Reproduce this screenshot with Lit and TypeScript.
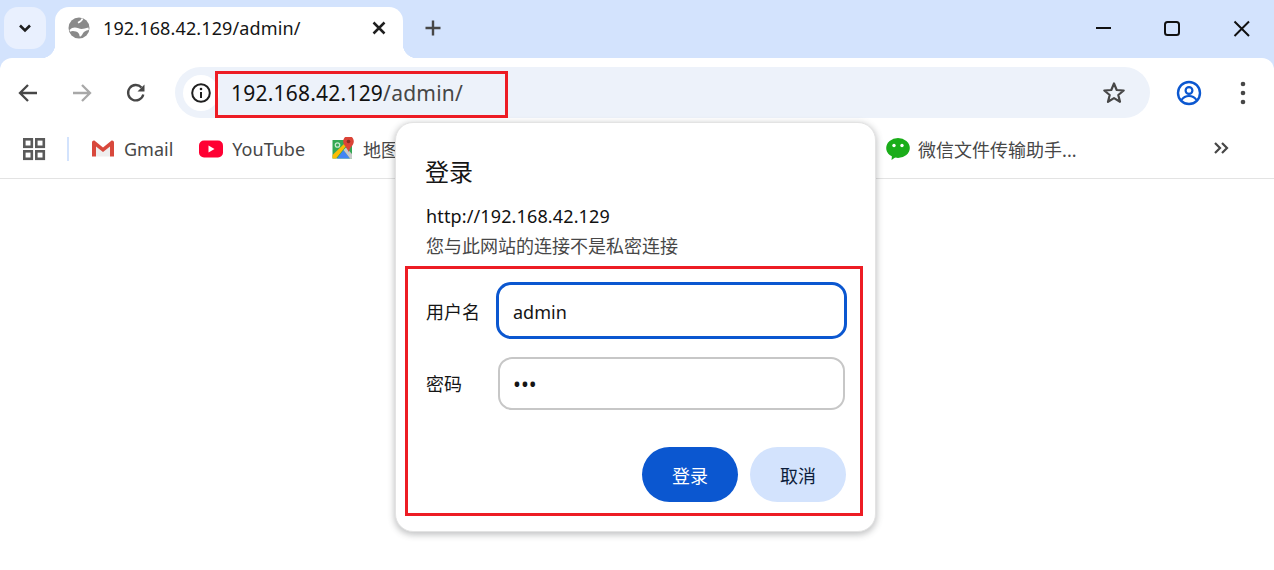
import { LitElement, html, css, svg } from "lit";
import { customElement } from "lit/decorators.js";

const FONT = css`"Noto Sans", "Noto Sans CJK SC", sans-serif`;

@customElement("app-root")
export class AppRoot extends LitElement {
  static styles = css`
    :host { display: block; position: relative; width: 1274px; height: 570px; overflow: hidden; background: #fff; font-family: ${FONT}; color: #1f1f1f; }
    * { box-sizing: border-box; }
    svg { display: block; flex: none; }
    .top { background: #d3e3fd; }
    .strip { height: 58px; display: flex; align-items: flex-start; padding: 7px 0 0 4px; }
    .tab-search { width: 42px; height: 42px; border-radius: 14px; background: #e9f0fe; display: flex; align-items: center; justify-content: center; margin-right: 9px; }
    .tab { position: relative; width: 348px; height: 51px; background: #fff; border-radius: 14px 14px 0 0; display: flex; align-items: center; padding: 0 16px 9px 13px; }
    .tab::before, .tab::after { content: ""; position: absolute; bottom: 0; width: 14px; height: 14px; }
    .tab::before { left: -14px; background: radial-gradient(circle at 0 0, transparent 14px, #fff 14.5px); }
    .tab::after { right: -14px; background: radial-gradient(circle at 100% 0, transparent 14px, #fff 14.5px); }
    .tab-title { flex: 1; margin-left: 13px; font-size: 18px; letter-spacing: 0.13px; white-space: nowrap; color: #151515; }
    .new-tab { margin: 9px 0 0 18px; width: 24px; height: 24px; }
    .win { margin-left: auto; display: flex; padding-top: 7px; padding-right: 17px; gap: 39px; }
    .win svg { width: 30px; height: 30px; }
    .toolbar { height: 70px; background: #fff; display: flex; align-items: flex-start; padding: 9px 0 0 0; border-radius: 12px 12px 0 0; }
    .nav { width: 54px; height: 51px; display: flex; align-items: center; justify-content: center; }
    .nav.first { margin-left: 1px; }
    .omni { margin-left: 12px; width: 975px; height: 51px; border-radius: 26px; background: #edf2fa; display: flex; align-items: center; padding-left: 8px; padding-right: 23px; }
    .info { width: 36px; height: 36px; border-radius: 50%; background: #fff; display: flex; align-items: center; justify-content: center; margin-right: 12px; }
    .url { flex: 1; font-size: 21px; letter-spacing: 0.22px; color: #474747; white-space: nowrap; }
    .url b { font-weight: 400; color: #111; }
    .right { display: flex; align-items: center; height: 51px; margin-left: 26px; }
    .right .dots { margin-left: 34px; }
    .bookmarks { height: 51px; border-bottom: 1px solid #e3e3e3; display: flex; align-items: flex-start; padding: 9px 0 0 22px; font-size: 18px; color: #474747; white-space: nowrap; }
    .sep { width: 2px; height: 24px; background: #d3e3fd; margin: 0 22px 0 21px; }
    .bm { display: flex; align-items: center; height: 24px; gap: 9px; }
    .bm.yt { margin-left: 26px; }
    .bm.maps { margin-left: 27px; }
    .bm.wx { margin-left: 487px; gap: 8px; }
    .more { margin-left: auto; margin-right: 44px; }
    .dialog { position: absolute; left: 395px; top: 122px; width: 481px; height: 410px; background: #fff; border: 1px solid #e3e3e3; border-radius: 18px; box-shadow: 0 2px 6px 1px rgba(60, 64, 67, .3); padding: 31px 29px 0 30px; display: flex; flex-direction: column; }
    .title { font-size: 24px; line-height: 36px; color: #151515; margin-left: -1px; }
    .origin { font-size: 18px; line-height: 26px; margin-top: 13px; letter-spacing: 0.13px; color: #111; }
    .note { font-size: 18px; line-height: 26px; margin-top: 4px; color: #474747; }
    .row { display: flex; align-items: center; font-size: 18px; color: #151515; }
    .row label { width: 72px; flex: none; }
    .rows { display: flex; flex-direction: column; gap: 18px; margin-top: 24px; }
    .row.a { height: 55px; }
    .row.b { height: 53px; padding-right: 1px; margin-top: 1px; }
    .row.b label { margin-top: -2px; }
    input { flex: 1; min-width: 0; font: inherit; color: #151515; background: #fff; outline: none; }
    input.focus { height: 57px; margin: 0 -1px 0 -2px; border: 3px solid #0b57d0; border-radius: 15px; padding: 2px 13px 0 14px; }
    input.pw { height: 53px; border: 2px solid #c7c7c7; border-radius: 14px; padding: 0 13px; font-size: 21px; }
    .actions { display: flex; justify-content: flex-end; gap: 12px; margin-top: 37px; }
    button { width: 96px; height: 55px; border: none; border-radius: 28px; font: inherit; font-size: 18px; padding: 0; }
    button.primary { background: #0b57d0; color: #fff; }
    button.ghost { background: #d3e3fd; color: #0b1d3a; }
    .mark { position: absolute; border: 3px solid #ed1c24; pointer-events: none; }
    .mark.u { left: 215px; top: 71px; width: 293px; height: 47px; }
    .mark.f { left: 405px; top: 266px; width: 458px; height: 250px; }
  `;

  private icon(w: number, h: number, body: unknown) {
    return html`<svg width=${w} height=${h} viewBox="0 0 ${w} ${h}">${body}</svg>`;
  }

  render() {
    return html`
      <div class="top">
      <div class="strip">
        <div class="tab-search">
          ${this.icon(16, 16, svg`<path d="M3 5.500 8 10.500 13 5.500" fill="none" stroke="#1f1f1f" stroke-width="2.600"/>`)}
        </div>
        <div class="tab">
          ${this.icon(22, 22, svg`
            <circle cx="11" cy="11" r="10.500" fill="#8a8a8a"/>
            <path d="M1.500 13C4 10 7.500 9.800 10.500 11.300 13 12.500 16 12 20.500 10.500L20.800 13C17.500 13.500 15.300 15 14.300 17.500L12.800 19.500 11.500 19.300C11.700 17 10.500 15.500 8 14.500 5.500 13.700 3.500 13.800 2 14.800Z" fill="#fff"/>
            <path d="M14.500 1.500C14 3.500 12 4.800 10 5.800" fill="none" stroke="#fff" stroke-width="1.700"/>`)}
          <div class="tab-title">192.168.42.129/admin/</div>
          ${this.icon(16, 16, svg`<path d="M2.500 2.500 13.500 13.500M13.500 2.500 2.500 13.500" stroke="#1f1f1f" stroke-width="2.500"/>`)}
        </div>
        <div class="new-tab">
          ${this.icon(24, 24, svg`<path d="M12 4.500v15M4.500 12h15" stroke="#474747" stroke-width="2.400"/>`)}
        </div>
        <div class="win">
          ${this.icon(30, 30, svg`<path d="M7 14h15" stroke="#111" stroke-width="2"/>`)}
          ${this.icon(30, 30, svg`<rect x="7" y="8" width="14" height="13" rx="2.500" fill="none" stroke="#111" stroke-width="2"/>`)}
          ${this.icon(30, 30, svg`<path d="M7.500 7.500 22 22M22 7.500 7.500 22" stroke="#111" stroke-width="2"/>`)}
        </div>
      </div>

      <div class="toolbar">
        <div class="nav first">
          ${this.icon(22, 22, svg`<path d="M20 11H3.500M11 3 3 11l8 8" fill="none" stroke="#474747" stroke-width="2.300"/>`)}
        </div>
        <div class="nav">
          ${this.icon(22, 22, svg`<path d="M2 11h16.500M11 3l8 8-8 8" fill="none" stroke="#a8a8a8" stroke-width="2.300"/>`)}
        </div>
        <div class="nav">
          ${this.icon(22, 22, svg`<path d="M18.300 12.500A7.700 7.700 0 1 1 16.500 5.500" fill="none" stroke="#474747" stroke-width="2.300"/><path d="M19.500 2.500v7h-7z" fill="#474747"/>`)}
        </div>
        <div class="omni">
          <div class="info">
            ${this.icon(22, 22, svg`<circle cx="11" cy="11" r="8.800" fill="none" stroke="#1f1f1f" stroke-width="2"/><path d="M11 10v6" stroke="#1f1f1f" stroke-width="2"/><circle cx="11" cy="7" r="1.300" fill="#1f1f1f"/>`)}
          </div>
          <div class="url"><b>192.168.42.129</b>/admin/</div>
          ${this.icon(26, 26, svg`<path d="M13 3.500 15.700 10l7 .5-5.400 4.500 1.700 6.800-6-3.700-6 3.700 1.700-6.800L3.300 10.500l7-.5Z" fill="none" stroke="#474747" stroke-width="2.200" stroke-linejoin="round"/>`)}
        </div>
        <div class="right">
          ${this.icon(26, 26, svg`<circle cx="13" cy="13" r="11" fill="none" stroke="#0b57d0" stroke-width="2.400"/><circle cx="13" cy="10.500" r="3.400" fill="none" stroke="#0b57d0" stroke-width="2.200"/><path d="M5.500 20c2-3 4.700-4 7.500-4s5.500 1 7.500 4" fill="none" stroke="#0b57d0" stroke-width="2.200"/>`)}
          <div class="dots">
            ${this.icon(14, 26, svg`<circle cx="7" cy="4" r="2.300" fill="#474747"/><circle cx="7" cy="13" r="2.300" fill="#474747"/><circle cx="7" cy="22" r="2.300" fill="#474747"/>`)}
          </div>
        </div>
      </div>
      </div>

      <div class="bookmarks">
        ${this.icon(24, 24, svg`<g fill="none" stroke="#5a5a5a" stroke-width="2.600"><rect x="2.300" y="2.300" width="7.500" height="7.500"/><rect x="14.300" y="2.300" width="7.500" height="7.500"/><rect x="2.300" y="14.300" width="7.500" height="7.500"/><rect x="14.300" y="14.300" width="7.500" height="7.500"/></g>`)}
        <div class="sep"></div>
        <div class="bm">
          ${this.icon(24, 24, svg`<path d="M5 8 12 13.500 19 8V19.500H5Z" fill="#eeeeee"/><path d="M1 5.500C1 3.800 2.800 3 4 4l8 6.500L20 4c1.200-1 3-.2 3 1.500V19.500H19V9.500l-7 5.500-7-5.500v10H1Z" fill="#d8483c"/>`)}
          <span>Gmail</span>
        </div>
        <div class="bm yt">
          ${this.icon(24, 24, svg`<rect x="0" y="3.500" width="24" height="17" rx="5" fill="#ff0033"/><path d="M9.500 8.500v7l6-3.500Z" fill="#fff"/>`)}
          <span>YouTube</span>
        </div>
        <div class="bm maps">
          ${this.icon(22, 24, svg`
            <path d="M.5 3h19.500v18.500H.5Z" fill="#34a853"/>
            <path d="M.5 18 12 7l2 2L4 21.500H.5Z" fill="#fbbc04"/>
            <path d="M5 21.500 11.500 13 18 21.500Z" fill="#4285f4"/>
            <path d="M11.500 13 14 10.500l6 6.500v4.500H18Z" fill="#c9c9c9"/>
            <circle cx="5.500" cy="8" r="2.200" fill="none" stroke="#c5e8cd" stroke-width="1.300"/>
            <path d="M16.500 -1C13.200 -1 11.200 1.500 11.200 4.500c0 3.800 3.800 5.500 5.300 10.500 1.500-5 5.300-6.700 5.300-10.500 0-3-2-5.500-5.300-5.500Z" fill="#db4437"/>
            <circle cx="16.500" cy="4.500" r="1.800" fill="#8c2a20"/>`)}
          <span>地图</span>
        </div>
        <div class="bm wx">
          ${this.icon(24, 24, svg`<ellipse cx="12" cy="11" rx="11.800" ry="10" fill="#1aad19"/><path d="M6 18.500 5.500 23l5-3.500Z" fill="#1aad19"/><circle cx="8" cy="8.500" r="1.700" fill="#fff"/><circle cx="16" cy="8.500" r="1.700" fill="#fff"/>`)}
          <span>微信文件传输助手...</span>
        </div>
        <div class="more">
          ${this.icon(18, 24, svg`<path d="M3 6l5 5-5 5M10 6l5 5-5 5" fill="none" stroke="#474747" stroke-width="2.200"/>`)}
        </div>
      </div>

      <div class="dialog">
        <div class="title">登录</div>
        <div class="origin">http://192.168.42.129</div>
        <div class="note">您与此网站的连接不是私密连接</div>
        <div class="rows">
          <div class="row a"><label>用户名</label><input class="focus" type="text" .value=${"admin"} /></div>
          <div class="row b"><label>密码</label><input class="pw" type="password" .value=${"abc"} /></div>
        </div>
        <div class="actions">
          <button class="primary">登录</button>
          <button class="ghost">取消</button>
        </div>
      </div>

      <div class="mark u"></div>
      <div class="mark f"></div>
    `;
  }
}
